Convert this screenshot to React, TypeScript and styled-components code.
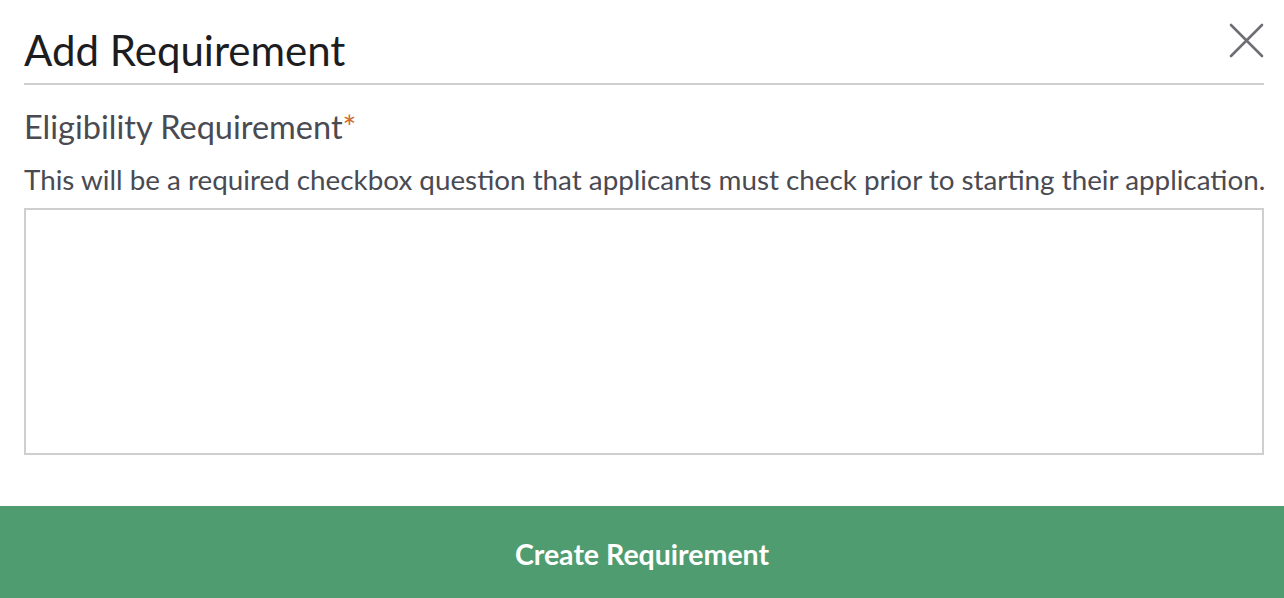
import styled, { createGlobalStyle } from "styled-components";

const GlobalStyle = createGlobalStyle`
  html, body {
    margin: 0;
    padding: 0;
    background: #fff;
  }
  body {
    font-family: Lato, "Liberation Sans", sans-serif;
  }
`;

const CloseIcon = () => (
  <svg width="35" height="35" viewBox="0 0 35 35" fill="none">
    <path
      d="M2 2 L33 33 M33 2 L2 33"
      stroke="#6e6e73"
      strokeWidth="2.6"
      strokeLinecap="round"
    />
  </svg>
);

const App = () => {
  return (
    <>
      <GlobalStyle />
      <Modal>
        <Body>
          <Header>
            <Title>Add Requirement</Title>
            <CloseButton aria-label="Close">
              <CloseIcon />
            </CloseButton>
          </Header>
          <Label>
            Eligibility Requirement<Required>*</Required>
          </Label>
          <Help>
            This will be a required checkbox question that applicants must
            check prior to starting their application.
          </Help>
          <TextArea />
        </Body>
        <SubmitButton>Create Requirement</SubmitButton>
      </Modal>
    </>
  );
};

const Modal = styled.div`
  width: 1284px;
  height: 598px;
  display: flex;
  flex-direction: column;
  background: #fff;
`;

const Body = styled.div`
  flex: 1;
  padding: 0 20px 0 24px;
  display: flex;
  flex-direction: column;
`;

const Header = styled.div`
  display: flex;
  align-items: flex-start;
  justify-content: space-between;
  border-bottom: 2px solid #d0d0d0;
  height: 85px;
  box-sizing: border-box;
`;

const Title = styled.h1`
  margin: 24px 0 0;
  font-size: 42px;
  font-weight: 400;
  line-height: 52px;
  color: #1d1d1f;
`;

const CloseButton = styled.button`
  margin-top: 23px;
  padding: 0;
  border: none;
  background: none;
  display: flex;
  cursor: pointer;
`;

const Label = styled.div`
  margin-top: 22px;
  font-size: 32.5px;
  line-height: 40px;
  color: #4a4a52;
`;

const Required = styled.span`
  color: #d1692a;
`;

const Help = styled.p`
  margin: 16px 0 0;
  font-size: 27.8px;
  line-height: 34px;
  color: #4a4a52;
  white-space: nowrap;
`;

const TextArea = styled.textarea`
  margin-top: 11px;
  height: 247px;
  width: 100%;
  box-sizing: border-box;
  border: 2px solid #cfcfcf;
  resize: none;
  font-family: inherit;
  font-size: 20px;
  outline: none;
`;

const SubmitButton = styled.button`
  height: 92px;
  width: 100%;
  padding: 4px 0 0;
  border: none;
  background: #4f9c70;
  color: #fff;
  font-family: Lato, "Liberation Sans", sans-serif;
  font-size: 28.5px;
  font-weight: 700;
  cursor: pointer;
`;

export default App;
